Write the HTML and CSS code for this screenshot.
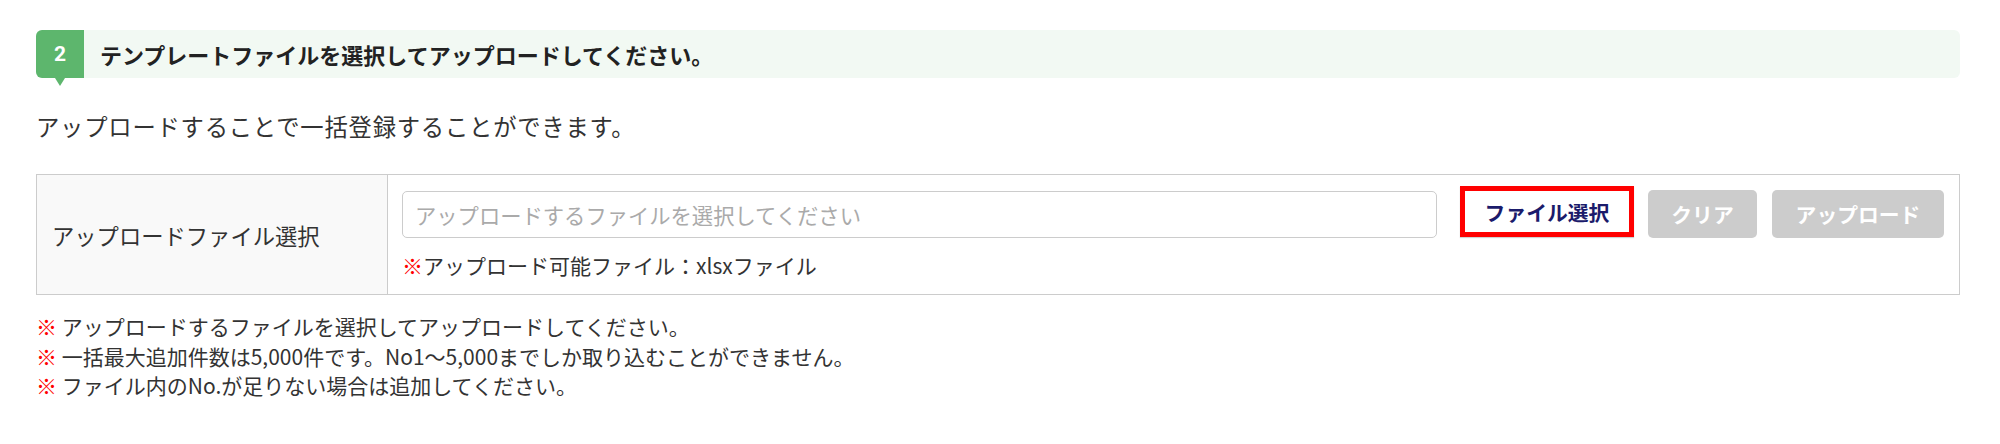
FILE: index.html
```html
<!DOCTYPE html>
<html lang="ja">
<head>
<meta charset="utf-8">
<title>テンプレートファイル アップロード</title>
<link rel="stylesheet" href="styles.css">
</head>
<body>
<main class="page">
  <div class="step-head">
    <div class="step-num">2</div>
    <h2 class="step-title">テンプレートファイルを選択してアップロードしてください。</h2>
  </div>
  <p class="lead">アップロードすることで一括登録することができます。</p>
  <div class="upload-table">
    <div class="label-cell">アップロードファイル選択</div>
    <div class="field-cell">
      <div class="field-row">
        <input class="file-input" type="text" placeholder="アップロードするファイルを選択してください" readonly>
        <button class="btn btn-select" type="button">ファイル選択</button>
        <button class="btn btn-gray btn-clear" type="button">クリア</button>
        <button class="btn btn-gray btn-upload" type="button">アップロード</button>
      </div>
      <p class="hint"><span class="mark">※</span>アップロード可能ファイル：xlsxファイル</p>
    </div>
  </div>
  <ul class="notes">
    <li><span class="mark">※</span> アップロードするファイルを選択してアップロードしてください。</li>
    <li><span class="mark">※</span> 一括最大追加件数は5,000件です。No1～5,000までしか取り込むことができません。</li>
    <li><span class="mark">※</span> ファイル内のNo.が足りない場合は追加してください。</li>
  </ul>
</main>
</body>
</html>
```
FILE: styles.css
```css
* { box-sizing: border-box; }
html, body { margin: 0; padding: 0; background: #ffffff; }
body {
  font-family: "Noto Sans CJK JP", "Noto Sans", sans-serif;
  color: #333333;
}
.page {
  padding: 30px 40px 0 36px;
}
.step-head {
  display: flex;
  align-items: stretch;
  height: 48px;
  background: #f2f9f3;
  border-radius: 6px;
}
.step-num {
  position: relative;
  width: 48px;
  flex: 0 0 48px;
  background: #5db66d;
  color: #ffffff;
  border-radius: 6px 0 0 6px;
  display: flex;
  align-items: center;
  justify-content: center;
  font-family: "Roboto", "Liberation Sans", sans-serif;
  font-weight: 700;
  font-size: 21px;
}
.step-num::after {
  content: "";
  position: absolute;
  left: 50%;
  bottom: -8px;
  margin-left: -5px;
  border-left: 5px solid transparent;
  border-right: 5px solid transparent;
  border-top: 8px solid #5db66d;
}
.step-title {
  margin: 0;
  padding-left: 16px;
  display: flex;
  align-items: center;
  font-size: 22px;
  font-weight: 700;
  color: #222222;
}
.lead {
  margin: 31px 0 0 0;
  font-size: 23.3px;
  letter-spacing: 0.8px;
  line-height: 34px;
}
.upload-table {
  margin-top: 31px;
  display: grid;
  grid-template-columns: 351px 1fr;
  border: 1px solid #cccccc;
}
.label-cell {
  background: #f9f9f9;
  border-right: 1px solid #cccccc;
  display: flex;
  align-items: center;
  padding-left: 15px;
  font-size: 22.3px;
}
.field-cell {
  padding: 11px 15px 14px 14px;
}
.field-row {
  display: flex;
  align-items: flex-start;
}
.file-input {
  flex: 1 1 auto;
  min-width: 0;
  margin-top: 5px;
  height: 47px;
  border: 1px solid #cccccc;
  border-radius: 5px;
  padding: 0 12px;
  font-family: inherit;
  font-size: 21.3px;
  color: #333333;
  background: #ffffff;
  outline: none;
}
.file-input::placeholder { color: #aaaaaa; }
.btn {
  font-family: inherit;
  font-weight: 700;
  font-size: 20.8px;
  cursor: pointer;
  padding: 0;
}
.btn-select {
  margin-left: 23px;
  width: 174px;
  height: 51px;
  background: #ffffff;
  color: #1b1b6b;
  border: 5px solid #ff0000;
  border-radius: 0;
  box-shadow: 0 1px 1px rgba(0, 0, 0, 0.18);
}
.btn-gray {
  margin-top: 4px;
  height: 48px;
  background: #cccccc;
  color: #ffffff;
  border: none;
  border-radius: 5px;
}
.btn-clear {
  margin-left: 14px;
  width: 109px;
}
.btn-upload {
  margin-left: 15px;
  width: 172px;
}
.hint {
  margin: 12px 0 0 0;
  font-size: 21px;
  line-height: 30px;
}
.mark { color: #ff0000; }
.notes {
  list-style: none;
  margin: 17px 0 0 0;
  padding: 0;
  font-size: 21px;
  line-height: 29.5px;
}
```
